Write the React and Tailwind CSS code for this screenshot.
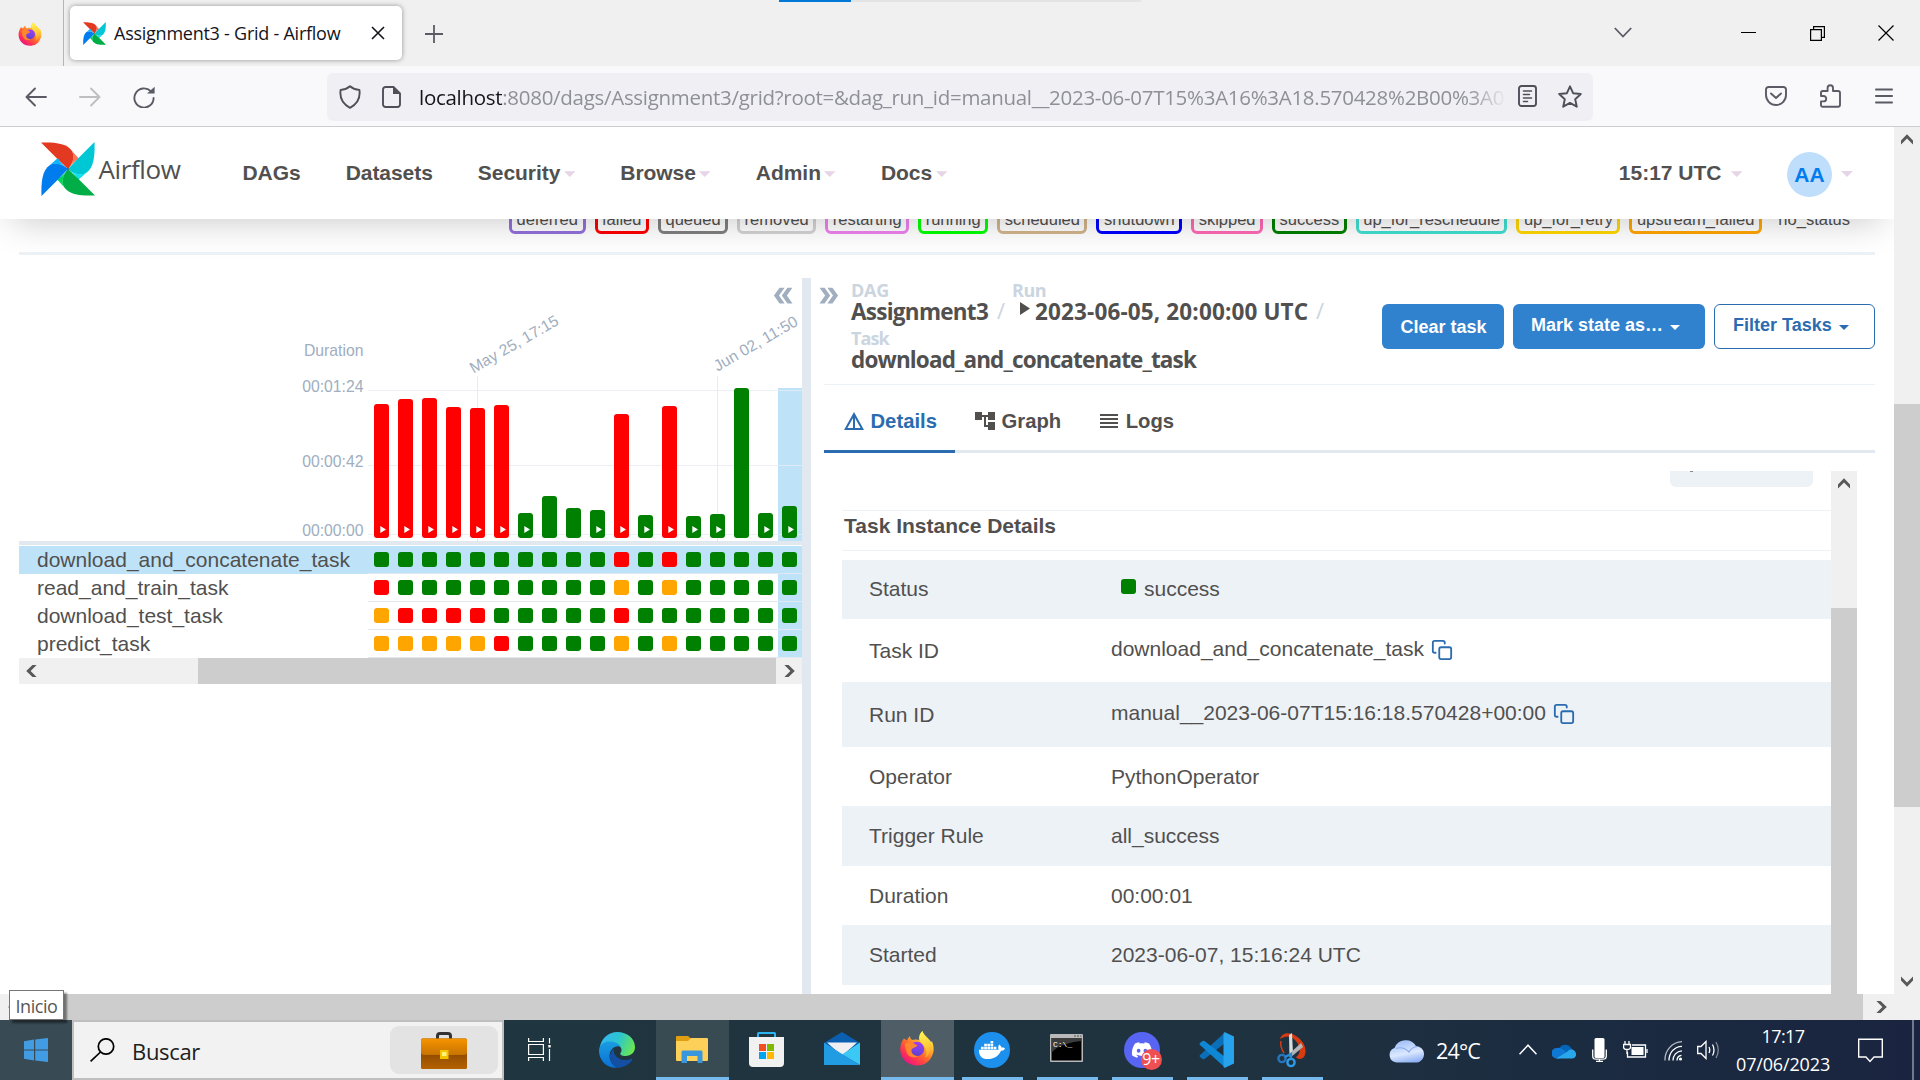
import React from "react";
import { FaDocker, FaDiscord } from "react-icons/fa";

const SEGOE = "font-['Open_Sans','Noto_Sans',sans-serif]";
const ARIAL = "font-['Liberation_Sans',Arial,sans-serif]";

/* ---------- shared drawings ---------- */

function Pinwheel({ className }) {
  const blades = [
    ["#e43921", "#ff7557", 0],
    ["#00c7d4", "#11e1ee", 90],
    ["#00ad46", "#04d659", 180],
    ["#017cee", "#0cb6ff", 270],
  ];
  return (
    <svg viewBox="0 0 54 54" className={className} preserveAspectRatio="none">
      {blades.map(([main, light, deg]) => (
        <g key={deg} transform={`rotate(${deg} 27 27)`}>
          <path d="M0 0.5 C13 0 26 1 31 9 C34.5 15 31.5 22 27 27 L17 17.5 Z" fill={main} />
          <path d="M31 9 L38 16.8 C33.5 19 30 23 27 27 C31.5 22 34 15 31 9 Z" fill={light} />
        </g>
      ))}
      <circle cx="27" cy="27" r="0.9" fill="#51504f" />
    </svg>
  );
}

function FirefoxLogo({ className, id }) {
  return (
    <svg viewBox="0 0 34 35" className={className}>
      <defs>
        <linearGradient id={`${id}-a`} x1="0.85" y1="0.1" x2="0.2" y2="0.95">
          <stop offset="0" stopColor="#fff44f" />
          <stop offset="0.3" stopColor="#ffb02e" />
          <stop offset="0.55" stopColor="#ff6a2b" />
          <stop offset="0.8" stopColor="#ff3057" />
          <stop offset="1" stopColor="#e31587" />
        </linearGradient>
        <linearGradient id={`${id}-b`} x1="0.6" y1="0" x2="0.4" y2="1">
          <stop offset="0" stopColor="#a03cf0" />
          <stop offset="0.6" stopColor="#7542e5" />
          <stop offset="1" stopColor="#5b3fc4" />
        </linearGradient>
        <linearGradient id={`${id}-c`} x1="0.5" y1="0" x2="0.7" y2="1">
          <stop offset="0" stopColor="#fff44f" />
          <stop offset="0.6" stopColor="#ffc83a" />
          <stop offset="1" stopColor="#ff9a2e" />
        </linearGradient>
      </defs>
      <path d="M4 7.5 L7 9.5 C7.5 7.5 9 6 10 5 C10 7 11 8.5 12.5 9 C14 8.5 17 8 19 9 C18.5 5 20 2 22.5 0 C23 4 29 7 31 11 C32 10.5 31.8 10 31.5 9.5 C34 14 34.5 20 32 25 C29 31.5 23.5 34.5 17 34.5 C7.5 34.5 0.3 27.5 0.3 18.5 C0.3 14 2 9.5 4 7.5 Z" fill={`url(#${id}-a)`} />
      <path d="M22.5 0 C23 4 29 7 30.5 13 C31.5 19 29 25 25 27 C28 21 25 15 21 11.5 C18.5 8 19.5 3 22.5 0 Z" fill={`url(#${id}-c)`} />
      <circle cx="17" cy="18" r="7.2" fill={`url(#${id}-b)`} />
      <path d="M5 13 C8 10.5 13 11 17.5 14.5 C16 16.5 13 16.5 11.5 18.5 C11 22 13.5 25 18 25 C14 28 8 26 6.5 21 C5.5 18 5 15 5 13 Z" fill="#ff8a2a" opacity="0.95" />
    </svg>
  );
}

function Chevron({ dir, className }) {
  const deg = { up: 0, right: 90, down: 180, left: 270 }[dir];
  return (
    <svg viewBox="0 0 14 14" className={className}>
      <path transform={`rotate(${deg} 7 7)`} d="M1 8.5 L7 2.2 L13 8.5 V12.6 L7 6.6 L1 12.6 Z" fill="#585858" />
    </svg>
  );
}

function Caret({ className }) {
  return (
    <svg viewBox="0 0 12 6" className={className}>
      <path d="M0 0 H12 L6 6 Z" fill="currentColor" />
    </svg>
  );
}

function DoubleArrow({ className }) {
  return (
    <svg viewBox="0 0 24 24" className={className} fill="currentColor">
      <path d="M15.5 5H11l5 7-5 7h4.5l5-7z" />
      <path d="M8.5 5H4l5 7-5 7h4.5l5-7z" />
    </svg>
  );
}

/* ---------- browser window ---------- */

function TabBar() {
  return (
    <div className="flex h-[66px] w-full shrink-0 items-start bg-[#f0f0f0]">
      <div className="flex h-[66px] w-[64px] shrink-0 items-center justify-start border-r border-[#b5b5b5] pl-[18px]">
        <FirefoxLogo id="ff-pin" className="mt-[1px] h-[24px] w-[24px]" />
      </div>
      <div className="ml-[6px] mt-[6px] flex h-[54px] w-[332px] shrink-0 items-center rounded-[5px] bg-white pl-[13px] shadow-[0_0_5px_rgba(0,0,0,0.4)]">
        <Pinwheel className="h-[23px] w-[23px]" />
        <span className={`${SEGOE} ml-[8px] w-[244px] whitespace-nowrap text-[18px] leading-[26px] tracking-[-0.25px] text-[#15141a]`}>
          Assignment3 - Grid - Airflow
        </span>
        <svg viewBox="0 0 14 14" className="ml-[13px] h-[14px] w-[14px]" stroke="#15141a" strokeWidth="1.6">
          <path d="M1 1 L13 13 M13 1 L1 13" />
        </svg>
      </div>
      <svg viewBox="0 0 18 18" className="ml-[23px] mt-[25px] h-[18px] w-[18px]" stroke="#5b5b66" strokeWidth="1.8">
        <path d="M9 0 V18 M0 9 H18" />
      </svg>
      <div className="ml-[336px] flex h-[2px] w-[362px] bg-[#e4e4e4]">
        <div className="h-[2px] w-[72px] bg-[#0078d7]" />
      </div>
      <svg viewBox="0 0 18 11" className="ml-[473px] mt-[27px] h-[11px] w-[18px]" fill="none" stroke="#5b5b66" strokeWidth="1.8">
        <path d="M0.8 1 L9 9.5 L17.2 1" />
      </svg>
      <div className="ml-[109px] mt-[32px] h-px w-[15px] bg-black" />
      <svg viewBox="0 0 15 15" className="ml-[54px] mt-[26px] h-[15px] w-[15px]" fill="none" stroke="#000" strokeWidth="1.2">
        <path d="M0.6 3.6 H11.4 V14.4 H0.6 Z M3.6 3.6 V0.6 H14.4 V11.4 H11.4" />
      </svg>
      <svg viewBox="0 0 16 16" className="ml-[53px] mt-[25px] h-[16px] w-[16px]" stroke="#000" strokeWidth="1.2">
        <path d="M0.5 0.5 L15.5 15.5 M15.5 0.5 L0.5 15.5" />
      </svg>
    </div>
  );
}

function NavToolbar() {
  return (
    <div className="flex h-[61px] w-full shrink-0 items-center border-b border-[#cccccf] bg-[#f9f9fb]">
      <svg viewBox="0 0 22 20" className="ml-[25px] mt-[2px] h-[20px] w-[22px]" fill="none" stroke="#5b5b66" strokeWidth="1.9" strokeLinecap="round" strokeLinejoin="round">
        <path d="M21 10 H1.5 M10 1.5 L1.5 10 L10 18.5" />
      </svg>
      <svg viewBox="0 0 22 20" className="ml-[32px] mt-[2px] h-[20px] w-[22px]" fill="none" stroke="#bebec3" strokeWidth="1.9" strokeLinecap="round" strokeLinejoin="round">
        <path d="M1 10 H20.5 M12 1.5 L20.5 10 L12 18.5" />
      </svg>
      <svg viewBox="0 0 22 22" className="ml-[32px] mt-[2px] h-[22px] w-[22px]" fill="none">
        <path d="M17.8 5.2 A9.6 9.6 0 1 0 20.6 12" stroke="#5b5b66" strokeWidth="1.9" strokeLinecap="round" />
        <path d="M21.6 0.7 V7.6 H14 Z" fill="#5b5b66" />
      </svg>
      <div className="ml-[172px] mt-px flex h-[48px] w-[1266px] items-center rounded-[6px] bg-[#f0f0f4]">
        <svg viewBox="0 0 22 24" className="ml-[12px] h-[24px] w-[22px]" fill="none" stroke="#4f4f59" strokeWidth="1.9" strokeLinejoin="round">
          <path d="M11 1.2 C9 3 5 4.6 1.6 4.9 C0.6 12 3.5 19 11 22.8 C18.5 19 21.4 12 20.4 4.9 C17 4.6 13 3 11 1.2 Z" />
        </svg>
        <svg viewBox="0 0 19 22" className="ml-[21px] h-[22px] w-[19px]" fill="none">
          <path d="M3.5 1 H11.5 L18 7.5 V18.5 A2.5 2.5 0 0 1 15.5 21 H3.5 A2.5 2.5 0 0 1 1 18.5 V3.5 A2.5 2.5 0 0 1 3.5 1 Z" stroke="#4f4f59" strokeWidth="1.9" />
          <path d="M11 1 V8 H18 Z" fill="#4f4f59" />
        </svg>
        <div className={`${SEGOE} ml-[18px] w-[1085px] overflow-hidden whitespace-nowrap text-[20.5px] leading-[30px] tracking-[-0.29px] text-[#8f8f98] [mask-image:linear-gradient(to_right,black_1050px,transparent_1088px)]`}>
          <span className="text-[#15141a]">localhost</span>:8080/dags/Assignment3/grid?root=&amp;dag_run_id=manual__2023-06-07T15%3A16%3A18.570428%2B00%3A0
        </div>
        <svg viewBox="0 0 19 22" className="ml-[14px] -mt-px h-[22px] w-[19px]" fill="none" stroke="#4f4f59" strokeWidth="1.9" strokeLinecap="round">
          <rect x="1" y="1" width="17" height="20" rx="2.5" />
          <path d="M5.5 6 H13.5 M5.5 9.5 H11.5 M5.5 13 H13.5 M5.5 16.5 H9.5" strokeWidth="1.6" />
        </svg>
        <svg viewBox="0 0 24 23" className="ml-[21px] -mt-px h-[23px] w-[24px]" fill="none" stroke="#4f4f59" strokeWidth="1.9" strokeLinejoin="round">
          <path d="M12 1.3 L15.1 8.2 L22.8 9 L17.2 14.2 L18.8 21.7 L12 17.9 L5.2 21.7 L6.8 14.2 L1.2 9 L8.9 8.2 Z" />
        </svg>
      </div>
      <svg viewBox="0 0 22 20" className="ml-[172px] h-[20px] w-[22px]" fill="none" stroke="#5b5b66" strokeWidth="1.9" strokeLinecap="round" strokeLinejoin="round">
        <path d="M3.5 1 H18.5 A2.5 2.5 0 0 1 21 3.5 V9 A10 10 0 0 1 1 9 V3.5 A2.5 2.5 0 0 1 3.5 1 Z M6 7.5 L11 12 L16 7.5" />
      </svg>
      <svg viewBox="0 0 21 24" className="ml-[33px] h-[24px] w-[21px]" fill="none" stroke="#5b5b66" strokeWidth="1.9" strokeLinejoin="round">
        <path d="M2.5 22.8 H18 A2 2 0 0 0 20 20.8 V9 A2 2 0 0 0 18 7 H13 V4 A2.7 2.7 0 0 0 7.6 4 V7 H2.8 A1.8 1.8 0 0 0 1 8.8 V12 H3.5 A2.7 2.7 0 0 1 3.5 17.4 H1 V21.3 A1.5 1.5 0 0 0 2.5 22.8 Z" />
      </svg>
      <svg viewBox="0 0 18 16" className="ml-[34px] h-[16px] w-[18px]" stroke="#5b5b66" strokeWidth="1.8" strokeLinecap="round">
        <path d="M0.9 1.5 H17.1 M0.9 8 H17.1 M0.9 14.5 H17.1" />
      </svg>
    </div>
  );
}

/* ---------- Airflow page ---------- */

function NavItem({ children, caret }) {
  return (
    <div className="flex items-center px-[22.5px] text-[21px] font-bold leading-[30px] tracking-[-0.05px]">
      {children}
      {caret && <Caret className="ml-[3.5px] mt-[2px] h-[6px] w-[11.5px] text-[#e6d5e6]" />}
    </div>
  );
}

function Header() {
  return (
    <div className="relative z-10 flex h-[92px] w-full shrink-0 items-center bg-white text-[#51504f] shadow-[0_14px_36px_-12px_rgba(0,0,0,0.22)]">
      <div className="flex w-[220px] items-center pl-[41px]">
        <Pinwheel className="-mt-[9px] h-[54px] w-[54px]" />
        <span className={`${SEGOE} -mt-[9px] ml-[3.5px] text-[26px] leading-[36px] tracking-[-0.39px]`}>Airflow</span>
      </div>
      <NavItem>DAGs</NavItem>
      <NavItem>Datasets</NavItem>
      <NavItem caret>Security</NavItem>
      <NavItem caret>Browse</NavItem>
      <NavItem caret>Admin</NavItem>
      <NavItem caret>Docs</NavItem>
      <div className="ml-auto flex items-center pr-[41px] text-[21px] font-bold leading-[30px]">
        <span>15:17 UTC</span>
        <Caret className="ml-[9px] mt-[2px] h-[6px] w-[11.5px] text-[#e6d5e6]" />
        <div className="ml-[45px] mt-[3px] flex h-[45px] w-[45px] items-center justify-center rounded-full bg-[#bfdefb] text-[#017cee]">AA</div>
        <Caret className="ml-[9px] mt-[2px] h-[6px] w-[12px] text-[#e6d5e6]" />
      </div>
    </div>
  );
}

const LEGEND = [
  ["deferred", "border-[#9370db]"],
  ["failed", "border-[#ff0000]"],
  ["queued", "border-[#808080]"],
  ["removed", "border-[#d3d3d3]"],
  ["restarting", "border-[#ee82ee]"],
  ["running", "border-[#00ff00]"],
  ["scheduled", "border-[#d2b48c]"],
  ["shutdown", "border-[#0000ff]"],
  ["skipped", "border-[#ff69b4]"],
  ["success", "border-[#008000]"],
  ["up_for_reschedule", "border-[#40e0d0]"],
  ["up_for_retry", "border-[#ffd700]"],
  ["upstream_failed", "border-[#ffa500]"],
  ["no_status", "border-transparent"],
];

function Legend() {
  return (
    <div className="-mt-[13px] flex h-[28px] shrink-0 gap-[9px] pl-[509px]">
      {LEGEND.map(([name, border]) => (
        <div key={name} className={`flex h-[28px] items-center rounded-[6px] border-[3px] px-[4.52px] pb-[2px] text-[16.5px] leading-[20px] ${border}`}>
          {name}
        </div>
      ))}
    </div>
  );
}

const BAR_HEIGHTS = [134, 139, 140, 131, 130, 133, 25, 42, 30, 28, 124, 23, 132, 22, 24, 150, 25, 32];
const BAR_FAILED = [0, 1, 2, 3, 4, 5, 10, 12];
const SCHEDULED_RUNS = [7, 8, 15];
const STATE_COLOR = { g: "bg-[#008000]", r: "bg-[#ff0000]", o: "bg-[#ffa500]" };
const TASKS = [
  ["download_and_concatenate_task", "ggggggggggrgrggggg"],
  ["read_and_train_task", "rgggggggggogoggggg"],
  ["download_test_task", "orrrrgggggrggggggg"],
  ["predict_task", "ooooorggggogoggggg"],
];

function Chart() {
  return (
    <div className="flex h-[263px] w-full">
      <div className="flex w-[349px] flex-col items-end pr-[4.5px] pt-[63px] text-[15.75px] leading-[20px] text-[#a0aec0]">
        <span>Duration</span>
        <span className="mt-[16px]">00:01:24</span>
        <span className="mt-[55px]">00:00:42</span>
        <span className="mt-[49px]">00:00:00</span>
      </div>
      <div className="relative flex w-[434px] flex-col justify-end">
        <div className="absolute right-0 top-[110px] h-[153px] w-[24px] bg-[#bee3f8]" />
        <div className="absolute left-[109px] top-[98px] h-[165px] w-px bg-[#e8ebf4]" />
        <div className="absolute left-[349px] top-[98px] h-[165px] w-px bg-[#e8ebf4]" />
        <div className="absolute left-0 top-[112px] h-px w-full bg-[#e8ebf4]/80" />
        <div className="absolute left-0 top-[187px] h-px w-full bg-[#e8ebf4]/80" />
        <div className="absolute left-0 top-[256px] h-px w-full bg-[#e8ebf4]/80" />
        <DoubleArrow className="absolute left-[402px] top-[4px] h-[27px] w-[27px] rotate-180 text-[#a0aec0]" />
        <span className="absolute left-[107.5px] top-[79.5px] origin-bottom-left -rotate-[30deg] whitespace-nowrap text-[15.75px] leading-[20px] text-[#a0aec0]">May 25, 17:15</span>
        <span className="absolute left-[351.5px] top-[78px] origin-bottom-left -rotate-[30deg] whitespace-nowrap text-[15.75px] leading-[20px] text-[#a0aec0]">Jun 02, 11:50</span>
        <div className="relative flex h-[153px] items-end pb-[3px] pl-[2px]">
          {BAR_HEIGHTS.map((h, i) => (
            <div key={i} className="w-[24px] pl-[4px]">
              <div
                className={`flex w-[15px] items-end justify-center rounded-[3px] pb-[5px] ${BAR_FAILED.includes(i) ? "bg-[#ff0000]" : "bg-[#008000]"}`}
                style={{ height: h }}
              >
                {!SCHEDULED_RUNS.includes(i) && (
                  <svg viewBox="0 0 6 7" className="ml-[2px] h-[7px] w-[6px]">
                    <path d="M0.3 0 L6 3.5 L0.3 7 Z" fill="#fff" />
                  </svg>
                )}
              </div>
            </div>
          ))}
        </div>
      </div>
    </div>
  );
}

function GridPanel() {
  return (
    <div className="flex w-[783px] shrink-0 flex-col">
      <Chart />
      <div className="mb-px h-[4px] w-full bg-[#e2e8f0]" />
      {TASKS.map(([name, states], row) => (
        <div key={name} className={`flex h-[28px] w-full ${row === 0 ? "bg-[#bee3f8]" : ""}`}>
          <div className="w-[349px] pl-[18px] text-[21px] leading-[28px]">{name}</div>
          <div className="flex h-[28px] w-[434px] border-b border-[#e2e8f0] pl-[2px]">
            {states.split("").map((s, i) => (
              <div key={i} className={`w-[24px] pl-[4px] pt-[6px] ${i === 17 ? "bg-[#bee3f8]" : ""}`}>
                <div className={`h-[15px] w-[15px] rounded-[3px] ${STATE_COLOR[s]}`} />
              </div>
            ))}
          </div>
        </div>
      ))}
      <div className="flex h-[26px] w-full items-center bg-[#f0f0f0]">
        <Chevron dir="left" className="ml-[5px] h-[14px] w-[14px]" />
        <div className="ml-[160px] h-[26px] w-[578px] bg-[#cdcdcd]" />
        <Chevron dir="right" className="ml-[7px] h-[14px] w-[14px]" />
      </div>
    </div>
  );
}

function Breadcrumb() {
  const label = "block text-[18px] leading-[20px] font-bold text-[#cbd5e0]";
  const slash = "absolute top-[19px] text-[22px] leading-[23px] font-normal text-[#cbd5e0]";
  return (
    <div className={`${SEGOE} ml-[9px] w-[500px] pt-[2px] text-[22.5px] font-bold leading-[24px]`}>
      <div className="flex h-[48px]">
        <div className="relative w-[161px]">
          <span className={`${label} tracking-[-0.26px]`}>DAG</span>
          <span className="tracking-[-0.73px]">Assignment3</span>
          <span className={`${slash} left-[146px]`}>/</span>
        </div>
        <div className="relative w-[310px]">
          <span className={`${label} tracking-[-0.5px]`}>Run</span>
          <div className="flex">
            <svg viewBox="0 0 10 13" className="ml-[8px] mt-[2px] h-[13px] w-[10px]">
              <path d="M0 0 L10 6.5 L0 13 Z" fill="#51504f" />
            </svg>
            <span className="ml-[5px] whitespace-nowrap tracking-[0.14px]">2023-06-05, 20:00:00 UTC</span>
          </div>
          <span className={`${slash} left-[304px]`}>/</span>
        </div>
      </div>
      <div className="h-[48px]">
        <span className={`${label} tracking-[-0.9px]`}>Task</span>
        <span className="tracking-[-0.85px]">download_and_concatenate_task</span>
      </div>
    </div>
  );
}

function Buttons() {
  return (
    <div className="ml-auto mt-[26px] flex h-[45px] text-[18px] font-bold leading-[24px]">
      <div className="flex w-[122px] items-center justify-center rounded-[6px] bg-[#3182ce] pl-px text-white">Clear task</div>
      <div className="ml-[9px] flex w-[192px] items-center rounded-[6px] bg-[#3182ce] pb-[3px] pl-[18px] text-white">
        Mark state as…
        <Caret className="ml-[7px] mt-[5px] h-[5px] w-[10px]" />
      </div>
      <div className="ml-[9px] flex w-[161px] items-center rounded-[6px] border border-[#2b6cb0] pb-[3px] pl-[18px] text-[#2b6cb0]">
        Filter Tasks
        <Caret className="ml-[7.5px] mt-[5px] h-[5px] w-[10px]" />
      </div>
    </div>
  );
}

function Tabs() {
  return (
    <div className="ml-[13px] flex h-[68px] items-stretch border-b-[3px] border-[#e2e8f0] pt-[10px] text-[20.25px] font-bold leading-[28px]">
      <div className="-mb-[3px] flex w-[131px] items-center border-b-[3px] border-[#2b6cb0] pb-[3px] pl-[18px] text-[#2b6cb0]">
        <svg viewBox="0 0 24 24" className="h-[24px] w-[24px]" fill="currentColor">
          <path d="M12 3 2 21h20L12 3zm1 5.92L18.6 19H13V8.92zm-2 0V19H5.4L11 8.92z" />
        </svg>
        <span className="ml-[4.5px]">Details</span>
      </div>
      <div className="flex items-center pb-[3px] pl-[18px]">
        <svg viewBox="0 0 24 24" className="h-[24px] w-[24px]" fill="currentColor">
          <path d="M22 11V3h-7v3H9V3H2v8h7V8h2v10h4v3h7v-8h-7v3h-2V8h2v3z" />
        </svg>
        <span className="ml-[4.5px]">Graph</span>
      </div>
      <div className="flex items-center pb-[3px] pl-[35.5px]">
        <svg viewBox="0 0 24 24" className="h-[24px] w-[24px]" fill="currentColor">
          <path d="M3 15h18v-2H3v2zm0 4h18v-2H3v2zm0-8h18V9H3v2zm0-6v2h18V5H3z" />
        </svg>
        <span className="ml-[5px]">Logs</span>
      </div>
    </div>
  );
}

function CopyIcon() {
  return (
    <svg viewBox="0 0 24 24" className="-mt-px ml-[7px] h-[22px] w-[22px]" fill="none" stroke="#2b6cb0" strokeWidth="2" strokeLinecap="round" strokeLinejoin="round">
      <rect x="9" y="9" width="13" height="13" rx="2" />
      <path d="M5 15H4a2 2 0 0 1-2-2V4a2 2 0 0 1 2-2h9a2 2 0 0 1 2 2v1" />
    </svg>
  );
}

function DetailRow({ label, children, height, shaded }) {
  return (
    <div className={`flex shrink-0 items-center pl-[27px] ${height} ${shaded ? "bg-[#edf2f7]" : "bg-white"}`}>
      <div className="w-[242px]">{label}</div>
      {children}
    </div>
  );
}

function DetailsTable() {
  return (
    <div className="mt-[9px] flex flex-col text-[21px] leading-[24px]">
      <DetailRow label="Status" height="h-[59px] pb-px" shaded>
        <div className="-mt-[5px] ml-[10px] h-[15px] w-[15px] rounded-[3px] bg-[#008000]" />
        <span className="ml-[8px]">success</span>
      </DetailRow>
      <DetailRow label="Task ID" height="h-[63px]">
        <span className="-mt-[3px]">download_and_concatenate_task</span>
        <CopyIcon />
      </DetailRow>
      <DetailRow label="Run ID" height="h-[65px]" shaded>
        <span className="-mt-[3px]">manual__2023-06-07T15:16:18.570428+00:00</span>
        <CopyIcon />
      </DetailRow>
      <DetailRow label="Operator" height="h-[59px]"><span>PythonOperator</span></DetailRow>
      <DetailRow label="Trigger Rule" height="h-[60px]" shaded><span>all_success</span></DetailRow>
      <DetailRow label="Duration" height="h-[59px]"><span>00:00:01</span></DetailRow>
      <DetailRow label="Started" height="h-[60px]" shaded><span>2023-06-07, 15:16:24 UTC</span></DetailRow>
    </div>
  );
}

function DetailsPanel() {
  return (
    <div className="flex w-[1064px] shrink-0 flex-col">
      <div className="flex h-[106px]">
        <DoubleArrow className="ml-[4px] mt-[4px] h-[27px] w-[27px] shrink-0 text-[#a0aec0]" />
        <Breadcrumb />
        <Buttons />
      </div>
      <div className="ml-[13px] border-t border-[#edf2f7]" />
      <Tabs />
      <div className="ml-[31px] mt-[18px] flex h-[523px] w-[1015px]">
        <div className="flex w-[989px] flex-col overflow-hidden">
          <div className="ml-[828px] h-[16px] w-[143px] shrink-0 rounded-b-[6px] bg-[#edf2f7]">
            <div className="ml-[20px] h-px w-[3px] bg-[#8a8a8a]" />
          </div>
          <div className="mt-[23px] flex h-[41px] shrink-0 items-center border-y border-[#edf2f7] pb-[10px] pl-[2px] text-[21px] font-bold leading-[24px]">
            Task Instance Details
          </div>
          <DetailsTable />
        </div>
        <div className="flex h-full w-[26px] flex-col items-center bg-[#f0f0f0] pt-[5px]">
          <Chevron dir="up" className="h-[14px] w-[14px]" />
          <div className="mt-[118px] w-full flex-1 bg-[#cdcdcd]" />
        </div>
      </div>
    </div>
  );
}

function Page() {
  return (
    <div className="flex h-[867px] w-full shrink-0 bg-white">
      <div className={`${ARIAL} flex w-[1894px] flex-col overflow-hidden text-[#51504f]`}>
        <Header />
        <Legend />
        <div className="ml-[19px] mt-[18px] h-[3px] w-[1856px] shrink-0 bg-[#edf2f7]" />
        <div className="ml-[19px] mt-[23px] flex h-[716px] shrink-0">
          <GridPanel />
          <div className="h-full w-[9px] shrink-0 bg-[#e2e8f0]" />
          <DetailsPanel />
        </div>
      </div>
      <div className="flex w-[26px] flex-col items-center bg-[#f0f0f0]">
        <Chevron dir="up" className="mt-[5px] h-[14px] w-[14px]" />
        <div className="mt-[258px] h-[403px] w-full bg-[#cdcdcd]" />
        <Chevron dir="down" className="mt-[168px] h-[14px] w-[14px]" />
      </div>
    </div>
  );
}

function PageScrollbar() {
  return (
    <div className="relative flex h-[26px] w-full shrink-0 items-center bg-[#f0f0f0]">
      <Chevron dir="left" className="ml-[6px] h-[14px] w-[14px]" />
      <div className="ml-[6px] h-[26px] w-[1837px] bg-[#cdcdcd]" />
      <Chevron dir="right" className="ml-[12px] h-[14px] w-[14px]" />
      <div className={`${SEGOE} absolute left-[9px] top-[-4px] z-20 flex h-[30px] w-[55px] items-center justify-center border border-[#767676] bg-white pt-px text-[18px] leading-[24px] tracking-[-0.43px] text-[#575757] shadow-[3px_3px_2px_rgba(0,0,0,0.45)]`}>
        Inicio
      </div>
    </div>
  );
}

/* ---------- taskbar ---------- */

function AppButton({ children, state }) {
  const bg = state === "focused" ? "bg-[#4e5d66]" : state === "open" ? "bg-[#384b53]" : "";
  return (
    <div className={`mr-[2px] flex h-[60px] w-[73px] shrink-0 flex-col items-center ${bg}`}>
      <div className="flex h-[57px] items-center pr-[2px] pt-[2px]">{children}</div>
      {(state === "open" || state === "focused") && <div className="h-[3px] w-full bg-[#76b9ed]" />}
      {state === "running" && <div className="h-[3px] w-[61px] bg-[#76b9ed]" />}
    </div>
  );
}

function EdgeLogo() {
  return (
    <svg viewBox="0 0 36 36" className="h-[36px] w-[36px]">
      <defs>
        <linearGradient id="edge-a" x1="0" y1="0.3" x2="1" y2="0.6">
          <stop offset="0" stopColor="#33b5f5" />
          <stop offset="0.5" stopColor="#2cc6cf" />
          <stop offset="1" stopColor="#6be84d" />
        </linearGradient>
        <linearGradient id="edge-b" x1="0.5" y1="0" x2="0.5" y2="1">
          <stop offset="0" stopColor="#1a9de0" />
          <stop offset="1" stopColor="#0a70d6" />
        </linearGradient>
      </defs>
      <path d="M0.5 17 C1.5 7 9 0 18.5 0 C28 0 36 6.5 36 15 C36 20.5 32 24 26.5 24 C22.5 24 20.5 22.5 21.5 21 C23.5 18.5 22.5 15 19 13 C12 9 3 11 0.5 17 Z" fill="url(#edge-a)" />
      <path d="M0 18 C1 11 7 9 12 9.5 C17 10 20.5 12 21.8 15 C17 12.5 10.5 17 10.5 24 C10.5 29 14 33.5 18 35.8 C7 36.5 -0.5 27.5 0 18 Z" fill="url(#edge-b)" />
      <path d="M14.5 17 C8 23 11 32 18 35.8 C25 36 31 32 33.5 27.5 C33.5 26.5 33 26.5 32 27 C25 30 14.5 27 14.5 17 Z" fill="#134fa3" />
    </svg>
  );
}

function FolderLogo() {
  return (
    <svg viewBox="0 0 32 27" className="-mt-[1px] h-[27px] w-[32px]">
      <path d="M0 1 Q0 0 1 0 H12 L15 2.5 V6 H0 Z" fill="#e09f10" />
      <path d="M0 5 H12 L15 2 H31 Q32 2 32 3 V24 Q32 25 31 25 H1 Q0 25 0 24 Z" fill="#fdd05a" />
      <path d="M5.5 27 V16 Q5.5 14.5 7 14.5 H25 Q26.5 14.5 26.5 16 V27 H21.5 V20 H11 V27 Z" fill="#3a96dd" />
    </svg>
  );
}

function StoreLogo() {
  return (
    <svg viewBox="0 0 35 35" className="h-[35px] w-[35px]">
      <path d="M9 7 V1.5 Q9 1 9.5 1 H25.5 Q26 1 26 1.5 V7" fill="none" stroke="#2bb4ee" strokeWidth="2" />
      <path d="M0 5 H35 V31 Q35 35 31 35 H4 Q0 35 0 31 Z" fill="#f1f1f1" />
      <rect x="10" y="12" width="7" height="7" fill="#f25022" />
      <rect x="18" y="12" width="7" height="7" fill="#7fba00" />
      <rect x="10" y="20" width="7" height="7" fill="#00a4ef" />
      <rect x="18" y="20" width="7" height="7" fill="#ffb900" />
    </svg>
  );
}

function MailLogo() {
  return (
    <svg viewBox="0 0 36 33" className="-mt-[2px] h-[33px] w-[36px]">
      <path d="M0 11 L18 0 L36 11 L30 17 H6 Z" fill="#0a5fb0" />
      <path d="M3 10.5 H33 L18 24 Z" fill="#f0f0f3" />
      <path d="M36 10.5 L18 22.5 L36 33 Z" fill="#3cc8f4" />
      <path d="M0 33 V10.5 L18.5 22.3 L36 33 Z" fill="#219be2" />
    </svg>
  );
}

function TerminalLogo() {
  return (
    <svg viewBox="0 0 33 28" className="-mt-[3px] h-[28px] w-[33px]">
      <rect width="33" height="28" rx="1" fill="#b9b9b9" />
      <rect x="1.5" y="4" width="30" height="22.5" fill="#000" />
      <path d="M1.5 4 H31.5 V7 C20 8 6 12 1.5 19 Z" fill="#3c3c3c" />
      <path d="M24 2 H26 M27 2 H29 M30 2 H31.5" stroke="#555" strokeWidth="1.2" />
      <text x="3" y="12.5" fill="#fff" fontSize="8" fontFamily="Liberation Mono, monospace">C:\_</text>
    </svg>
  );
}

function DiscordLogo() {
  return (
    <div className="relative flex h-[36px] w-[36px] items-center justify-center rounded-full bg-[#5865f2]">
      <FaDiscord className="h-[22px] w-[22px] text-white" />
      <div className={`${SEGOE} absolute left-[17px] top-[17px] flex h-[21px] w-[21px] items-center justify-center rounded-full bg-[#ed4f53] text-[16px] leading-[20px] tracking-[-0.4px] text-white`}>
        9+
      </div>
    </div>
  );
}

function CodeLogo() {
  return (
    <svg viewBox="0 0 36 36" className="h-[36px] w-[36px]">
      <path d="M26 0.5 L1 23 Q0 24 1 25 L3.5 27 Q4.5 27.5 5.5 27 L26 11 Z" fill="#0a6fb8" />
      <path d="M26 35.5 L1 13 Q0 12 1 11 L3.5 9 Q4.5 8.5 5.5 9 L26 25 Z" fill="#0e87d4" />
      <path d="M26 0.3 L35 4.5 V31.5 L26 35.7 Q24.5 36 24.5 34 V2 Q24.5 0 26 0.3 Z" fill="#27a3ee" />
    </svg>
  );
}

function SnipLogo() {
  return (
    <svg viewBox="0 0 30 36" className="h-[36px] w-[30px]">
      <path d="M3 7 C4 1 12 -1 19 4 C27 9 31 18 27 25 C24 28 20 27 19 25 C24 22 24 14 18 8 C13 3 8 4 3 7 Z" fill="#d83b12" />
      <path d="M4 9 C3 14 5 18 7 21" fill="none" stroke="#d83b12" strokeWidth="1.5" />
      <path d="M12 3 L15 1 L16 22 L12.5 25 Z" fill="#dcdcdc" />
      <path d="M24 11 L26 15 L14 25 L12 22 Z" fill="#b5b5b5" />
      <circle cx="5" cy="26.5" r="3.6" fill="none" stroke="#2475bd" strokeWidth="2.4" />
      <circle cx="14" cy="30.5" r="3.6" fill="none" stroke="#2d9be6" strokeWidth="2.4" />
      <path d="M8 25 L14 22 V27" fill="none" stroke="#2d8bd6" strokeWidth="2.4" />
    </svg>
  );
}

function Briefcase() {
  return (
    <svg viewBox="0 0 46 37" className="h-[37px] w-[46px]">
      <defs>
        <linearGradient id="case-top" x1="0" y1="0" x2="0" y2="1">
          <stop offset="0" stopColor="#f79400" />
          <stop offset="1" stopColor="#c67300" />
        </linearGradient>
        <linearGradient id="case-low" x1="0" y1="0" x2="0" y2="1">
          <stop offset="0.4" stopColor="#8a4700" />
          <stop offset="1" stopColor="#b56200" />
        </linearGradient>
      </defs>
      <path d="M16.500 7 V4 Q16.500 1.500 19 1.500 H27 Q29.500 1.500 29.500 4 V7" fill="none" stroke="#333" strokeWidth="3" />
      <rect x="0" y="6.500" width="46" height="30.500" rx="1.500" fill="url(#case-low)" />
      <path d="M0 8 Q0 6.500 1.500 6.500 H44.500 Q46 6.500 46 8 V20 Q46 23 43 23 H3 Q0 23 0 20 Z" fill="url(#case-top)" />
      <rect x="19" y="18" width="8.500" height="9" fill="#f5c400" />
      <rect x="21" y="20" width="4.500" height="4" fill="#fff07a" />
    </svg>
  );
}

function Tray() {
  return (
    <div className={`${SEGOE} flex h-[60px] flex-1 items-center text-white`}>
      <svg viewBox="0 0 36 26" className="ml-[58px] -mt-[1px] h-[26px] w-[36px]">
        <defs>
          <linearGradient id="cloud" x1="0.3" y1="0" x2="0.6" y2="1">
            <stop offset="0" stopColor="#9dbdf7" />
            <stop offset="0.6" stopColor="#dbe8ff" />
            <stop offset="1" stopColor="#8fb1f3" />
          </linearGradient>
        </defs>
        <path d="M7.5 25.5 A7.5 7.5 0 0 1 5.5 11 A12 12 0 0 1 27 9 A8.3 8.3 0 0 1 28 25.5 Z" fill="url(#cloud)" />
        <path d="M7 11.5 Q14 9 20 15 Q23 10 28 9.5" fill="none" stroke="#88a9ec" strokeWidth="1.2" />
      </svg>
      <span className="ml-[11px] mt-[2px] w-[46px] whitespace-nowrap text-[21.5px] leading-[30px] tracking-[-0.85px]">24°C</span>
      <svg viewBox="0 0 18 11" className="ml-[37px] -mt-[2px] h-[11px] w-[18px]" fill="none" stroke="#fff" strokeWidth="1.5">
        <path d="M0.5 10.3 L9 1.2 L17.5 10.3" />
      </svg>
      <svg viewBox="0 0 24 16" className="ml-[15px] h-[17px] w-[24px]">
        <path d="M7 6 A7 7 0 0 1 19.5 6 L18 12 L6 13 Z" fill="#0364b8" />
        <path d="M4.5 16 A5 5 0 0 1 5 5.5 Q8 4.5 11 7 L15 10 L8 16 Z" fill="#0f78d4" />
        <path d="M4 16 L15 9.5 Q18 5.5 21.5 7.5 Q24.5 9.5 24 13 Q23 16 20 16 Z" fill="#28a8ea" />
      </svg>
      <svg viewBox="0 0 15 24" className="ml-[16px] h-[24px] w-[15px]">
        <rect x="2.5" y="0" width="10" height="20" rx="1.5" fill="#fff" />
        <path d="M0.7 11.5 V18 Q0.7 21.2 4 21.2 H11 Q14.3 21.2 14.3 18 V11.5 M7.5 21 V23.3 M4 23.3 H11" fill="none" stroke="#fff" strokeWidth="1.3" />
      </svg>
      <svg viewBox="0 0 25 18" className="ml-[16px] h-[18px] w-[25px]" fill="none" stroke="#fff" strokeWidth="1.3">
        <path d="M9 4 H22.5 V16 H4.5 V11" />
        <rect x="8.5" y="6" width="12" height="8" fill="#fff" stroke="none" />
        <path d="M24 8 V12 M2 0 V3 M6 0 V3 M0.6 3.5 H7.5 V6 Q7.5 8.5 4 8.5 Q0.6 8.5 0.6 6 Z M4 8.5 V13" />
      </svg>
      <svg viewBox="0 0 19 20" className="ml-[16px] mt-[2px] h-[20px] w-[19px]" fill="none" strokeWidth="1.3">
        <path d="M1 19.5 C0.5 10 8 1 18 0.7" stroke="#b4bcc5" />
        <path d="M5 19.5 C5 12 10 5.5 18 5.3" stroke="#fff" />
        <path d="M9 19.5 C9 14.5 12.5 10.2 18 9.8" stroke="#fff" />
        <path d="M13 19.5 C13 17 14.5 14.7 17.5 14.3" stroke="#fff" />
        <circle cx="16.5" cy="18" r="1.6" fill="#fff" />
      </svg>
      <svg viewBox="0 0 23 20" className="ml-[14px] h-[20px] w-[23px]" fill="none" stroke="#fff" strokeWidth="1.3">
        <path d="M0.7 6.5 H4 L9 1.5 V18.5 L4 13.5 H0.7 Z M12 7 Q13.5 10 12 13 M15.5 4.5 Q18.5 10 15.5 15.5" />
        <path d="M19 2 Q23.5 10 19 18" stroke="#7e8a99" />
      </svg>
      <div className="ml-[16px] flex w-[94px] flex-col items-center text-[18px] leading-[28px]">
        <span className="tracking-[-0.58px]">17:17</span>
        <span className="tracking-[-0.15px]">07/06/2023</span>
      </div>
      <svg viewBox="0 0 25 24" className="ml-[28px] h-[25px] w-[25px]" fill="none" stroke="#fff" strokeWidth="1.4">
        <path d="M0.7 0.7 H24.3 V18.5 H16 L12 23 L8 18.5 H0.7 Z" />
      </svg>
      <div className="ml-auto mr-[6px] h-[60px] w-[2px] bg-[#6f7a8c]" />
    </div>
  );
}

function Taskbar() {
  return (
    <div className={`${SEGOE} flex h-[60px] w-full shrink-0 bg-[linear-gradient(to_right,#1f373f_0%,#1f353f_30%,#1f323f_65%,#1b2c40_80%,#1a2440_100%)]`}>
      <div className="flex w-[72px] shrink-0 items-center justify-center bg-[#384a54]">
        <svg viewBox="0 0 24 24" className="h-[24px] w-[24px]" fill="#429ce3">
          <path d="M0 3.2 L10 1.6 V11.4 H0 Z M11.2 1.4 L24 0 V11.4 H11.2 Z M0 12.6 H10 V22.4 L0 20.8 Z M11.2 12.6 H24 V24 L11.2 22.6 Z" />
        </svg>
      </div>
      <div className="flex w-[432px] shrink-0 items-center border-2 border-[#bfbfbf] bg-[#f2f2f2]">
        <svg viewBox="0 0 25 24" className="ml-[16px] h-[24px] w-[25px]" fill="none" stroke="#000" strokeWidth="1.7">
          <circle cx="16" cy="8.5" r="7.7" />
          <path d="M10.5 14 L0.6 23.4" />
        </svg>
        <span className="ml-[17px] mt-[2px] w-[240px] text-[22px] leading-[30px] tracking-[-0.33px] text-[#202020]">Buscar</span>
        <div className="ml-auto mr-[4px] flex h-[48px] w-[108px] items-center justify-center rounded-[9px] bg-[#e3e3e3]">
          <Briefcase />
        </div>
      </div>
      <AppButton>
        <svg viewBox="0 0 23 23" className="h-[23px] w-[23px]" fill="none" stroke="#fff" strokeWidth="1.2">
          <path d="M0.6 0 V3.5 H15.4 V0 M0.6 6.5 H15.4 V16.5 H0.6 Z M0.6 23 V19.5 H15.4 V23 M21.5 0 V5.5 M21.5 11 V23" />
          <rect x="20.3" y="7" width="2.4" height="2.5" fill="#fff" stroke="none" />
        </svg>
      </AppButton>
      <div className="ml-[2px] flex">
        <AppButton><EdgeLogo /></AppButton>
        <AppButton state="open"><FolderLogo /></AppButton>
        <AppButton><StoreLogo /></AppButton>
        <AppButton><MailLogo /></AppButton>
        <AppButton state="focused"><FirefoxLogo id="ff-bar" className="-mt-[2px] h-[35px] w-[34px]" /></AppButton>
        <AppButton state="running">
          <div className="flex h-[36px] w-[36px] items-center justify-center rounded-full bg-[#1d90ed]">
            <FaDocker className="h-[26px] w-[26px] text-white" />
          </div>
        </AppButton>
        <AppButton state="running"><TerminalLogo /></AppButton>
        <AppButton state="running"><DiscordLogo /></AppButton>
        <AppButton state="running"><CodeLogo /></AppButton>
        <AppButton state="running"><SnipLogo /></AppButton>
      </div>
      <Tray />
    </div>
  );
}

export default function App() {
  return (
    <div className="flex h-[1080px] w-[1920px] flex-col overflow-hidden bg-white">
      <TabBar />
      <NavToolbar />
      <Page />
      <PageScrollbar />
      <Taskbar />
    </div>
  );
}
